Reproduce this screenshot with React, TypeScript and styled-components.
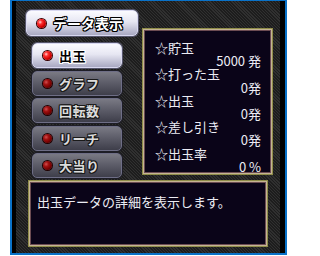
import React from "react";
import styled, { createGlobalStyle, css } from "styled-components";

const Global = createGlobalStyle`
  html, body { margin: 0; padding: 0; background: #ffffff; }
  body { font-family: "Noto Sans CJK JP", "Noto Sans", sans-serif; }
`;

const Frame = styled.div`
  margin-left: 10px;
  width: 277px;
  height: 255px;
  box-sizing: border-box;
  border-style: solid;
  border-color: #0a72c8;
  border-width: 1px 2px 2px 2px;
  background: #000;
  display: flex;
`;

const Inner = styled.div`
  width: 264px;
  margin-left: 4px;
  box-sizing: border-box;
  padding: 9px 0 0 10px;
  background-color: #262626;
  background-image: repeating-linear-gradient(
    45deg,
    #303030 0px,
    #303030 1px,
    #1d1d1d 1px,
    #1d1d1d 2.2px
  );
  display: flex;
  flex-direction: column;
`;

const Top = styled.div`
  display: flex;
  gap: 4px;
  height: 168px;
`;

const LeftCol = styled.div`
  width: 112px;
  display: flex;
  flex-direction: column;
`;

const outline = (c: string) => css`
  text-shadow: 1px 0 0 ${c}, -1px 0 0 ${c}, 0 1px 0 ${c}, 0 -1px 0 ${c},
    1px 1px 0 ${c}, -1px -1px 0 ${c}, 1px -1px 0 ${c}, -1px 1px 0 ${c};
`;

const Btn = styled.div<{ $active?: boolean; $header?: boolean }>`
  box-sizing: border-box;
  display: flex;
  align-items: center;
  gap: 7px;
  padding-left: 10px;
  border-radius: 5px;
  font-weight: 700;
  font-size: ${(p) => (p.$header ? "14px" : "13px")};
  letter-spacing: ${(p) => (p.$header ? "0" : "0.5px")};
  line-height: 1;
  ${(p) =>
    p.$active
      ? css`
          background: linear-gradient(#fbfbff 0%, #e6e6f2 45%, #a9a9c2 100%);
          border: 1px solid #d8d8f0;
          box-shadow: 0 0 0 1px #55556a;
        `
      : css`
          background: linear-gradient(#7a7a84 0%, #5e5e6a 45%, #3e3e4a 100%);
          border: 1px solid #6e6e86;
          box-shadow: 0 0 0 1px #1e1e26;
        `}
  ${(p) =>
    p.$header
      ? css`
          color: #ffffff;
          ${outline("#000")}
        `
      : p.$active
      ? css`
          color: #000000;
          ${outline("#ffffff")}
        `
      : css`
          color: #dcdcdc;
          ${outline("#1a1a1a")}
        `}
`;

const Header = styled(Btn)`
  width: 112px;
  height: 26px;
`;

const Dot = styled.span<{ $on?: boolean }>`
  flex: none;
  width: 9px;
  height: 9px;
  border-radius: 50%;
  box-shadow: 0 0 0 1px ${(p) => (p.$on ? "#3a0000" : "#200000")};
  background: ${(p) =>
    p.$on
      ? "radial-gradient(circle at 35% 35%, #ffd0d0 0, #ff3030 25%, #d00000 60%, #700000 100%)"
      : "radial-gradient(circle at 35% 35%, #d05050 0, #a01010 30%, #700000 65%, #400000 100%)"};
`;

const List = styled.div`
  margin: 7px 0 0 6px;
  width: 90px;
  display: flex;
  flex-direction: column;
  gap: 2.5px;
`;

const MenuBtn = styled(Btn)`
  height: 25px;
`;

const Panel = styled.div`
  box-sizing: border-box;
  background: #0a0418;
  border: 1px solid #8e8c48;
  box-shadow: inset 0 0 0 1px #c4b494, inset 0 0 0 2px #6c4c52;
  color: #ececf4;
  font-size: 13px;
  font-family: "Noto Sans CJK JP", "Noto Sans", sans-serif;
`;

const Stats = styled(Panel)`
  margin-top: 18px;
  width: 131px;
  height: 147px;
  padding: 12px 11px 0 12px;
  display: flex;
  flex-direction: column;
`;

const Label = styled.div`
  line-height: 13.2px;
  height: 13.2px;
  white-space: nowrap;
`;

const Value = styled(Label)`
  text-align: right;
`;

const Message = styled(Panel)`
  margin: 2px 0 0 2px;
  width: 240px;
  height: 67px;
  padding: 13px 0 0 8px;
  line-height: 16px;
`;

const items = ["出玉", "グラフ", "回転数", "リーチ", "大当り"];
const stats: [string, string][] = [
  ["☆貯玉", "5000 発"],
  ["☆打った玉", "0発"],
  ["☆出玉", "0発"],
  ["☆差し引き", "0発"],
  ["☆出玉率", "0 %"],
];

export default function App() {
  return (
    <>
      <Global />
      <Frame>
        <Inner>
          <Top>
            <LeftCol>
              <Header $active $header>
                <Dot $on />
                データ表示
              </Header>
              <List>
                {items.map((t, i) => (
                  <MenuBtn key={t} $active={i === 0}>
                    <Dot $on={i === 0} />
                    {t}
                  </MenuBtn>
                ))}
              </List>
            </LeftCol>
            <Stats>
              {stats.map(([l, v]) => (
                <React.Fragment key={l}>
                  <Label>{l}</Label>
                  <Value>{v}</Value>
                </React.Fragment>
              ))}
            </Stats>
          </Top>
          <Message>出玉データの詳細を表示します。</Message>
        </Inner>
      </Frame>
    </>
  );
}
